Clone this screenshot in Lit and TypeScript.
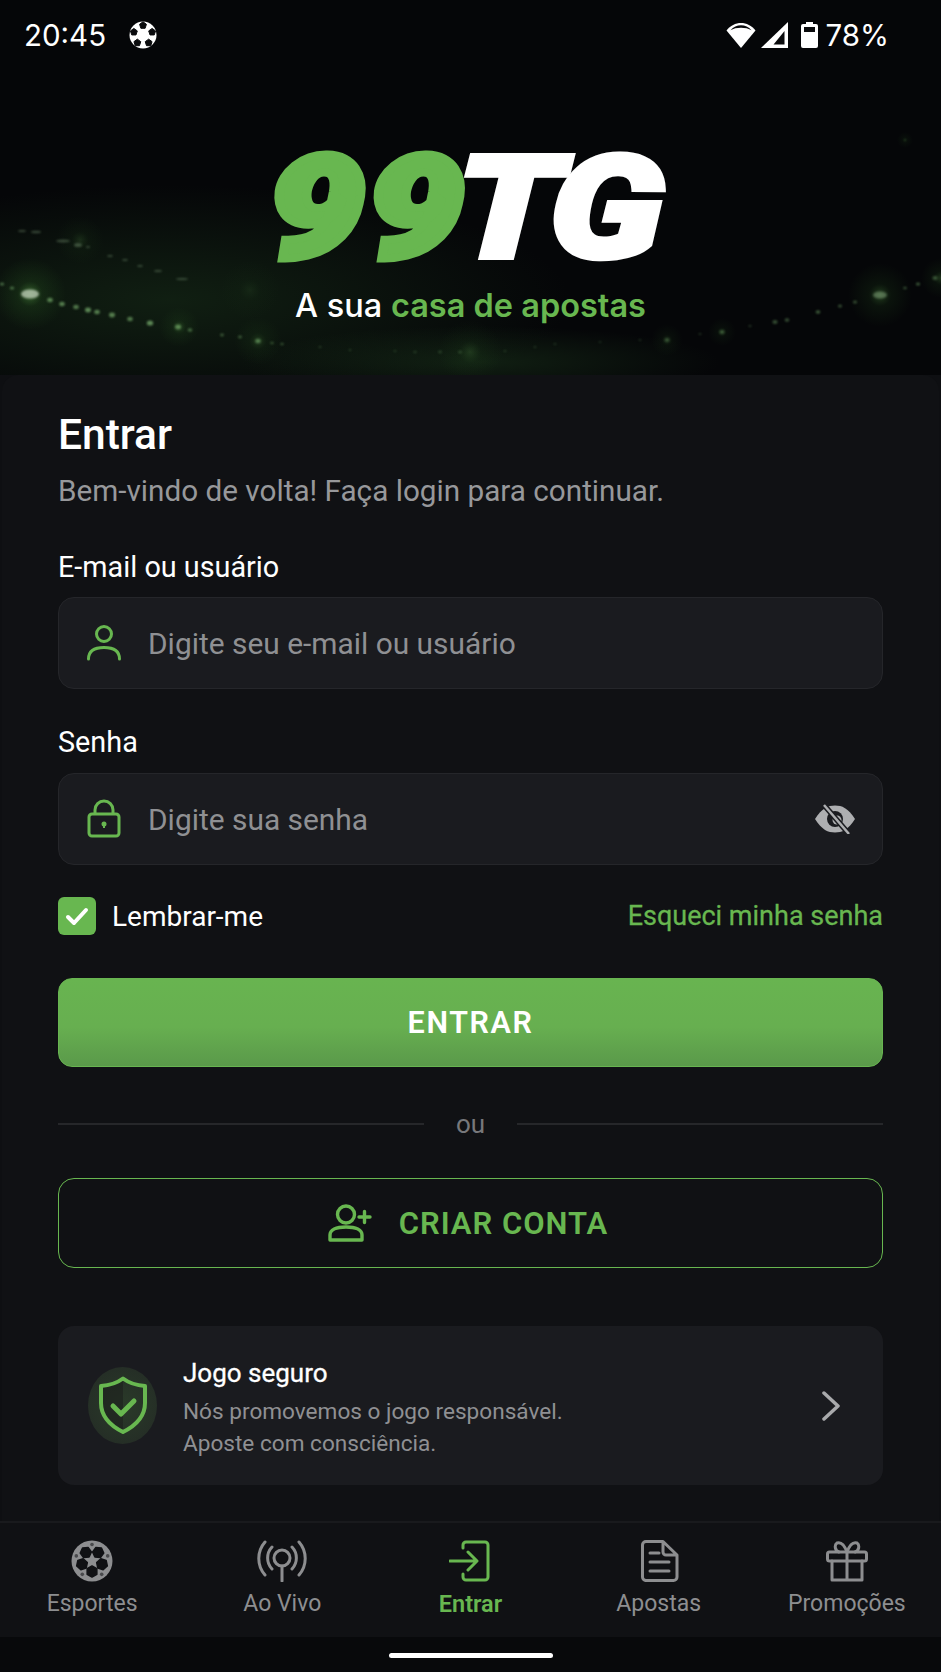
import { LitElement, html, css, svg } from "lit";
import { customElement } from "lit/decorators.js";

const GREEN = "#68b750";
const GRAY = "#8d8e90";

const polar = (cx: number, cy: number, r: number, deg: number) => {
  const a = (deg * Math.PI) / 180;
  return [cx + r * Math.cos(a), cy + r * Math.sin(a)];
};
const poly = (cx: number, cy: number, r: number, n: number, rot: number) =>
  Array.from({ length: n }, (_, i) => polar(cx, cy, r, rot + (i * 360) / n).map((v) => v.toFixed(2)).join(",")).join(" ");

const navBall = svg`<svg class="nav-icon" viewBox="0 0 42 42">
  <circle cx="21" cy="21" r="20.500" fill="${GRAY}"/>
  ${[-54, 18, 90, 162, 234].map((d) => {
    const [x, y] = polar(21, 21, 10.5, d);
    return svg`<polygon points="${poly(x, y, 5.6, 6, d)}" fill="#101114" stroke="#101114" stroke-width="1.500" stroke-linejoin="round"/>`;
  })}
  <polygon points="${poly(21, 21, 4.800, 5, -90)}" fill="${GRAY}"/>
  ${[-90, -18, 54, 126, 198].map((d) => {
    const [x, y] = polar(21, 21, 16.5, d);
    return svg`<circle cx="${x}" cy="${y}" r="1.800" fill="#101114" opacity=".55"/>`;
  })}
</svg>`;

const statusBall = svg`<svg class="s-ball" viewBox="0 0 28 28">
  <circle cx="14" cy="14" r="13.500" fill="#fff"/>
  ${[-90, -18, 54, 126, 198].map((d) => {
    const [x, y] = polar(14, 14, 9.6, d);
    return svg`<polygon points="${poly(x, y, 3.6, 5, d)}" fill="#0a0b0d" stroke="#0a0b0d" stroke-linejoin="round"/>`;
  })}
</svg>`;

// light positions on the stadium rim: x, y, radius of the dot, opacity
const rim: [number, number, number, number][] = [
  [2, 284, 1.6, 0.45], [12, 288, 1.6, 0.45], [50, 300, 2.2, 0.55], [62, 304, 2.2, 0.55], [76, 307, 2.2, 0.5], [88, 310, 2.4, 0.6], [97, 312, 2.2, 0.55],
  [112, 315, 2.4, 0.55], [130, 319, 2.2, 0.5], [150, 323, 2.6, 0.6], [178, 327, 2.4, 0.5], [190, 330, 1.8, 0.4], [222, 335, 1.4, 0.35],
  [240, 337, 1.4, 0.35], [258, 341, 2.2, 0.45], [272, 343, 1.2, 0.3], [282, 344, 1.2, 0.3], [320, 347, 1, 0.22], [350, 350, 1, 0.2], [395, 351, 1, 0.18], [415, 352, 1.2, 0.18],
  [440, 352, 1.4, 0.2], [460, 352, 1.6, 0.2], [505, 351, 1, 0.18], [535, 347, 1, 0.18], [555, 344, 1, 0.18], [600, 342, 1, 0.16], [640, 340, 1, 0.18], [667, 340, 2, 0.26],
  [700, 334, 1, 0.22], [722, 332, 2, 0.3], [750, 326, 1, 0.26], [775, 322, 2, 0.35], [787, 320, 1.8, 0.35], [818, 312, 1.800, 0.4], [840, 306, 1.5, 0.35], [855, 302, 1.5, 0.35],
  [905, 288, 1.2, 0.35], [918, 284, 1.5, 0.4], [935, 278, 2, 0.35],
];
const glows: [number, number, number, number][] = [
  [30, 294, 36, 0.9], [880, 295, 32, 0.6], [179, 327, 20, 0.5], [258, 341, 24, 0.4], [470, 352, 32, 0.35], [667, 340, 16, 0.35], [722, 332, 14, 0.35], [941, 278, 20, 0.5], [80, 240, 24, 0.3], [250, 290, 30, 0.16],
];
const stand: [number, number, number, number][] = [
  [22, 231, 4, 1], [36, 232, 5, 1.2], [63, 241, 7, 1.5], [78, 245, 4, 2], [88, 247, 2, 1], [110, 256, 3, 1], [125, 260, 3, 1], [140, 266, 3, 1], [158, 271, 4, 1], [182, 279, 6, 1],
];

const stadium = svg`<svg class="stadium" viewBox="0 0 941 375" preserveAspectRatio="none">
  <defs>
    <radialGradient id="glow"><stop offset="0" stop-color="#74c95e" stop-opacity=".5"/><stop offset=".35" stop-color="#3f8e30" stop-opacity=".16"/><stop offset="1" stop-color="#3f8e30" stop-opacity="0"/></radialGradient>
    <radialGradient id="hazeL"><stop offset="0" stop-color="#1e3d1e" stop-opacity=".45"/><stop offset="1" stop-color="#1e3d1e" stop-opacity="0"/></radialGradient>
  </defs>
  <ellipse cx="170" cy="300" rx="400" ry="115" fill="url(#hazeL)"/>
  <ellipse cx="480" cy="362" rx="240" ry="36" fill="url(#hazeL)"/>
  ${glows.map(([x, y, r, o]) => svg`<circle cx="${x}" cy="${y}" r="${r}" fill="url(#glow)" opacity="${o}"/>`)}
  <g class="soft">
    ${stand.map(([x, y, rx, ry]) => svg`<ellipse cx="${x}" cy="${y}" rx="${rx}" ry="${ry}" fill="#7d9c77" opacity=".4"/>`)}
    ${rim.map(([x, y, r, o]) => svg`<ellipse cx="${x}" cy="${y}" rx="${r + 0.6}" ry="${r}" fill="#8fcf82" opacity="${o}"/>`)}
    <ellipse cx="30" cy="294" rx="9" ry="4.500" fill="#b9c9b3" opacity=".8"/>
    <ellipse cx="880" cy="295" rx="7" ry="3.500" fill="#7fa278" opacity=".55"/>
  </g>
  <circle cx="905" cy="140" r="8" fill="url(#glow)" opacity=".35"/>
</svg>`;

@customElement("app-root")
export class AppRoot extends LitElement {
  static styles = css`
    :host { display: block; width: 941px; height: 1672px; overflow: hidden; background: #0e0f12; font-family: Roboto, "Liberation Sans", sans-serif; color: #fff; }
    .page { display: flex; flex-direction: column; height: 1672px; }
    .hero { position: relative; height: 375px; flex: none; background: #050608; overflow: hidden; }
    .stadium { position: absolute; inset: 0; width: 100%; height: 100%; }
    .soft { filter: blur(0.9px); }
    .status { position: relative; display: flex; align-items: center; justify-content: space-between; height: 70px; padding: 0 52px 0 24px; font-family: Inter, sans-serif; font-size: 29.5px; }
    .s-left, .s-right { display: flex; align-items: center; }
    .s-ball { width: 28px; height: 28px; margin-left: 23px; }
    .s-right svg { display: block; }
    .s-right .wifi { width: 30px; height: 26px; margin-right: 5px; }
    .s-right .signal { width: 27px; height: 26px; margin-right: 13px; }
    .s-right .batt { width: 17px; height: 26px; margin-right: 8px; }
    .brand { position: relative; display: flex; flex-direction: column; align-items: center; padding-top: 74px; }
    .logo { font-family: Roboto, sans-serif; font-weight: 900; font-style: italic; font-size: 142px; line-height: 130px; height: 130px; letter-spacing: -6px; display: block; margin-right: 17px; transform: scaleX(1.2) skewX(-2deg); -webkit-text-stroke: 6px currentColor; white-space: nowrap; color: #fff; }
    .logo b { color: #68b750; font-weight: 900; letter-spacing: 3px; margin-right: -9px; -webkit-text-stroke: 8px currentColor; }
    .tag { font-family: Inter, sans-serif; font-size: 32.5px; font-weight: 500; line-height: 40px; margin-top: 12px; white-space: nowrap; }
    .tag b { color: #68b750; font-weight: 600; }
    .card { flex: none; height: 1146px; box-sizing: border-box; margin: 0 2px; padding: 36px 56px 0; background: #101114; border-radius: 16px 16px 0 0; display: flex; flex-direction: column; }
    h1 { margin: 0; font-size: 42.5px; line-height: 48px; font-weight: 500; }
    .sub { margin-top: 12px; font-size: 29.7px; line-height: 40px; color: #97989b; }
    label { display: block; font-size: 28.8px; line-height: 36px; color: #fff; }
    .l1 { margin-top: 38px; }
    .l2 { margin-top: 35px; }
    .field { margin-top: 13px; height: 92px; box-sizing: border-box; background: #1a1b1f; border: 1.5px solid #25262a; border-radius: 16px; display: flex; align-items: center; padding: 0 26px 0 27px; }
    .l1 + .field { margin-top: 12px; }
    .field svg.fi { width: 36px; height: 40px; flex: none; }
    .field span { margin-left: 26px; font-size: 29.9px; color: #8f9093; flex: 1; }
    .eye { width: 42px; height: 30px; flex: none; }
    .row { margin-top: 32px; height: 38px; display: flex; align-items: center; justify-content: space-between; }
    .remember { display: flex; align-items: center; font-size: 28px; }
    .check { width: 38px; height: 38px; border-radius: 6px; background: #68b750; display: flex; align-items: center; justify-content: center; margin-right: 16px; }
    .check svg { width: 26px; height: 22px; }
    .forgot { color: #68b750; font-size: 27px; font-weight: 400; -webkit-text-stroke: 0.3px #68b750; }
    .primary { margin-top: 43px; height: 89px; box-sizing: border-box; border: 1px solid #68b551; border-radius: 14px; background: linear-gradient(180deg, #68b450 0%, #67af50 55%, #5a994a 100%); display: flex; align-items: center; justify-content: center; font-size: 30.5px; font-weight: 600; letter-spacing: 1.6px; }
    .or { margin-top: 42px; height: 30px; display: flex; align-items: center; gap: 32px; color: #77787b; font-size: 26px; }
    .or i { flex: 1; height: 2px; background: #26272a; }
    .ghost { margin-top: 39px; height: 90px; box-sizing: border-box; border: 1.5px solid #68b750; border-radius: 16px; padding-right: 5px; display: flex; align-items: center; justify-content: center; color: #68b750; font-size: 31px; font-weight: 600; letter-spacing: 1px; }
    .ghost svg { width: 44px; height: 38px; margin-right: 27px; }
    .safe { margin-top: 58px; height: 159px; box-sizing: border-box; background: #1a1b1f; border-radius: 16px; display: flex; align-items: center; padding: 0 42px 0 30px; }
    .badge { width: 69px; height: 77px; flex: none; border-radius: 50%; background: radial-gradient(circle, #2a3a29 0%, #232a25 100%); display: flex; align-items: center; justify-content: center; }
    .badge svg { width: 50px; height: 59px; }
    .safe-text { flex: 1; margin-left: 26px; padding-top: 4px; }
    .safe-title { font-size: 26px; line-height: 34px; font-weight: 400; -webkit-text-stroke: 0.3px #fff; }
    .safe-desc { margin-top: 6px; font-size: 22.6px; line-height: 32px; color: #8f9093; }
    .chev { width: 20px; height: 30px; flex: none; }
    .nav { flex: none; height: 116px; box-sizing: border-box; border-top: 2px solid #191a1d; background: #101114; display: grid; grid-template-columns: repeat(5, 1fr); padding-top: 17px; }
    .item { display: flex; flex-direction: column; align-items: center; color: #8d8e90; font-size: 23px; line-height: 30px; }
    .item:first-child { padding-right: 4px; }
    .item.on { color: #68b750; font-weight: 600; font-size: 23.5px; }
    .nav-icon { width: 42px; height: 42px; margin-bottom: 7px; display: block; }
    .nav-icon.wide { width: 52px; }
    .home { flex: none; height: 35px; background: #08090b; display: flex; justify-content: center; padding-top: 16px; box-sizing: border-box; }
    .home i { width: 164px; height: 5px; border-radius: 3px; background: #fff; }
  `;

  render() {
    const lineIcon = (body: unknown, color = GRAY, vb = "0 0 42 42", cls = "nav-icon") => html`<svg class=${cls} viewBox=${vb} fill="none" stroke=${color} stroke-width="3" stroke-linecap="round" stroke-linejoin="round">${body}</svg>`;
    return html`<div class="page">
      <div class="hero">
        ${stadium}
        <div class="status">
          <div class="s-left"><span>20:45</span>${statusBall}</div>
          <div class="s-right">
            <svg class="wifi" viewBox="0 0 30 26"><path d="M15 26 .5 8.500C8-1.500 22-1.500 29.500 8.500Z" fill="#fff"/><path d="M4.500 8.300C10 1.500 20 1.500 25.500 8.300 20 5 10 5 4.500 8.300Z" fill="#0a0b0d"/></svg>
            <svg class="signal" viewBox="0 0 27 26"><path d="M27 0V26H0Z" fill="#fff"/><path d="M23.500 9V22.500H12.500Z" fill="#0a0b0d"/></svg>
            <svg class="batt" viewBox="0 0 17 26"><path d="M5 0h7v2h3a2 2 0 0 1 2 2v20a2 2 0 0 1-2 2H2a2 2 0 0 1-2-2V4a2 2 0 0 1 2-2h3Z" fill="#fff"/><rect x="3" y="5" width="11" height="5" fill="#0a0b0d"/></svg>
            <span>78%</span>
          </div>
        </div>
        <div class="brand">
          <div class="logo"><b>99</b>TG</div>
          <div class="tag">A sua <b>casa de apostas</b></div>
        </div>
      </div>

      <div class="card">
        <h1>Entrar</h1>
        <div class="sub">Bem-vindo de volta! Faça login para continuar.</div>
        <label class="l1">E-mail ou usuário</label>
        <div class="field">
          <svg class="fi" viewBox="0 0 36 40" fill="none" stroke=${GREEN} stroke-width="3" stroke-linecap="round"><circle cx="18" cy="11" r="7.500"/><path d="M2.500 36c0-8 6-11.500 15.500-11.500S33.500 28 33.500 36"/></svg>
          <span>Digite seu e-mail ou usuário</span>
        </div>
        <label class="l2">Senha</label>
        <div class="field">
          <svg class="fi" viewBox="0 0 36 40" fill="none" stroke=${GREEN} stroke-width="3" stroke-linejoin="round"><rect x="3" y="15" width="30" height="22" rx="3"/><path d="M9 15V11a9 9 0 0 1 18 0v4"/><circle cx="18" cy="25" r="2.500" fill=${GREEN} stroke="none"/><path d="M18 26v3" stroke-width="2"/></svg>
          <span>Digite sua senha</span>
          <svg class="eye" viewBox="0 0 42 30"><path d="M1 15C8 4 14 1.500 21 1.500S34 4 41 15C34 26 28 28.500 21 28.500S8 26 1 15Z" fill="#aeafb1"/><circle cx="21" cy="15" r="8" fill="#1a1b1f"/><circle cx="23" cy="16" r="4.500" fill="#aeafb1"/><path d="M10 1 35 30" stroke="#1a1b1f" stroke-width="5.500"/><path d="M10 1 35 30" stroke="#aeafb1" stroke-width="2.500"/></svg>
        </div>
        <div class="row">
          <div class="remember"><div class="check"><svg viewBox="0 0 26 22" fill="none" stroke="#fff" stroke-width="4" stroke-linecap="round" stroke-linejoin="round"><path d="M4 12l6 6L22 5"/></svg></div>Lembrar-me</div>
          <div class="forgot">Esqueci minha senha</div>
        </div>
        <div class="primary">ENTRAR</div>
        <div class="or"><i></i>ou<i></i></div>
        <div class="ghost">
          <svg viewBox="0 0 44 38" fill="none" stroke=${GREEN} stroke-width="3.400" stroke-linejoin="round" stroke-linecap="round"><circle cx="18" cy="10.500" r="8.500"/><path d="M2 36v-5c0-5 6-8 16-8s16 3 16 8v5Z"/><path d="M31 13h11M36.500 7.500v11"/></svg>
          CRIAR CONTA
        </div>
        <div class="safe">
          <div class="badge">
            <svg viewBox="0 0 50 59" fill="none"><path d="M25 3C25 3 25 55 25 55 14 50 3 42 3 27V10C11 9.500 19 7 25 3Z" fill="#1c201d" opacity=".6"/><path d="M25 2.500C31 7 39 9.500 47 10V27C47 42 36 50.500 25 56 14 50.500 3 42 3 27V10C11 9.500 19 7 25 2.500Z" stroke=${GREEN} stroke-width="4" stroke-linejoin="round"/><path d="M15 30l8 8 13-13" stroke=${GREEN} stroke-width="5" stroke-linecap="round" stroke-linejoin="round"/></svg>
          </div>
          <div class="safe-text">
            <div class="safe-title">Jogo seguro</div>
            <div class="safe-desc">Nós promovemos o jogo responsável.<br />Aposte com consciência.</div>
          </div>
          <svg class="chev" viewBox="0 0 20 30" fill="none" stroke="#a9aaac" stroke-width="3.500" stroke-linecap="round" stroke-linejoin="round"><path d="M3 2l14 13L3 28"/></svg>
        </div>
      </div>

      <div class="nav">
        <div class="item">${navBall}Esportes</div>
        <div class="item">${lineIcon(svg`<circle cx="26" cy="18" r="8"/><path d="M26 26v15M16 7a16 16 0 0 0 0 22M36 7a16 16 0 0 1 0 22M9 2a25 25 0 0 0 0 33M43 2a25 25 0 0 1 0 33"/>`, GRAY, "0 0 52 42", "nav-icon wide")}Ao Vivo</div>
        <div class="item on">${lineIcon(svg`<path d="M14 8V5a3 3 0 0 1 3-3h19a3 3 0 0 1 3 3v32a3 3 0 0 1-3 3H17a3 3 0 0 1-3-3v-3M1 21h26M19 12l9 9-9 9"/>`, GREEN)}Entrar</div>
        <div class="item">${lineIcon(svg`<path d="M8 1.500h17L39 15v22a3.500 3.500 0 0 1-3.500 3.500h-27A3.500 3.500 0 0 1 4.500 37V5A3.500 3.500 0 0 1 8 1.500ZM25 2v10a3 3 0 0 0 3 3h10M12 13h9M12 22h19M12 31h19"/>`)}Apostas</div>
        <div class="item">${lineIcon(svg`<rect x="1.500" y="12" width="39" height="9" rx="2"/><path d="M6 21v19h30V21M21 12v28M21 12c-3-8-7-10-10-9-3 2-2 8 2 9M21 12c3-8 7-10 10-9 3 2 2 8-2 9"/>`)}Promoções</div>
      </div>
      <div class="home"><i></i></div>
    </div>`;
  }
}
